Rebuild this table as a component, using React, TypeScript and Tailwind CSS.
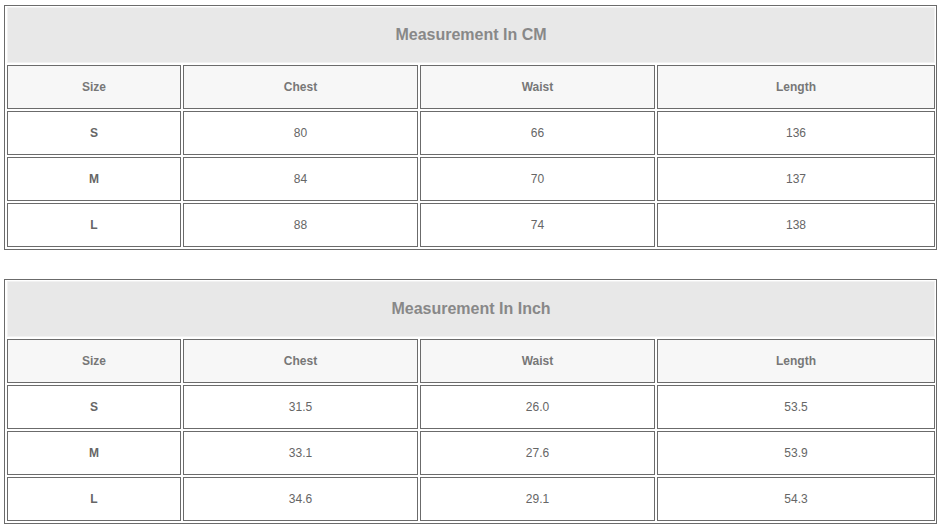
import React from "react";

type Table = { title: string; rows: [string, string, string, string][] };

const tables: Table[] = [
  {
    title: "Measurement In CM",
    rows: [
      ["S", "80", "66", "136"],
      ["M", "84", "70", "137"],
      ["L", "88", "74", "138"],
    ],
  },
  {
    title: "Measurement In Inch",
    rows: [
      ["S", "31.5", "26.0", "53.5"],
      ["M", "33.1", "27.6", "53.9"],
      ["L", "34.6", "29.1", "54.3"],
    ],
  },
];

const headers = ["Size", "Chest", "Waist", "Length"];

function SizeTable({ t }: { t: Table }) {
  return (
    <div className="w-fit border border-[#6b6b6b] pl-[2px] pr-[1px] pt-[1px] pb-[2px]">
      <div className="grid grid-cols-[174px_235px_235px_278px] gap-[2px]">
        <div className="col-span-4 h-[56px] bg-[#e8e8e8] border border-[#f2f2f2] flex items-center justify-center text-[16px] font-bold text-[#888888]">
          {t.title}
        </div>
        {headers.map((h) => (
          <div
            key={h}
            className="h-[44px] bg-[#f7f7f7] border border-[#6b6b6b] flex items-center justify-center text-[12px] font-bold text-[#777777]"
          >
            {h}
          </div>
        ))}
        {t.rows.map((r) =>
          r.map((c, i) => (
            <div
              key={r[0] + i}
              className={
                i === 0
                  ? "h-[44px] bg-white border border-[#6b6b6b] flex items-center justify-center text-[12px] font-bold text-[#666666]"
                  : "h-[44px] bg-white border border-[#6b6b6b] flex items-center justify-center text-[12px] text-[#666666]"
              }
            >
              {c}
            </div>
          ))
        )}
      </div>
    </div>
  );
}

export default function App() {
  return (
    <div
      className="min-h-[530px] w-[945px] bg-white pl-[4px] pt-[5px] flex flex-col gap-[29px]"
      style={{ fontFamily: '"Liberation Sans", Arial, sans-serif' }}
    >
      {tables.map((t) => (
        <SizeTable key={t.title} t={t} />
      ))}
    </div>
  );
}
